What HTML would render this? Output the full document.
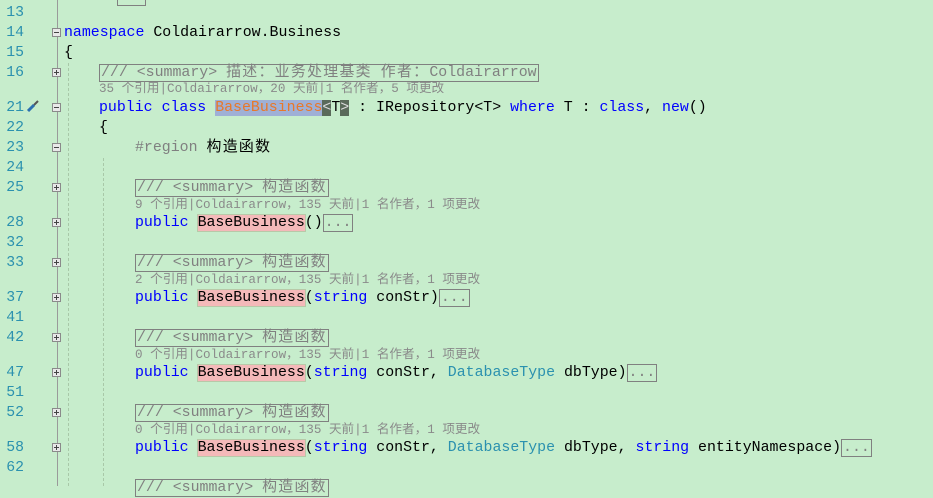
<!DOCTYPE html>
<html><head><meta charset="utf-8"><style>
html,body{margin:0;padding:0;}
body{width:933px;height:486px;background:#c7edcc;position:relative;overflow:hidden;font-family:"Liberation Mono","Noto Sans CJK SC",monospace;}
.n{position:absolute;left:0;width:24px;text-align:right;color:#2b91af;font-size:14.8px;line-height:20px;height:20px;}
.c{position:absolute;font-size:14.9px;line-height:20px;height:20px;white-space:pre;color:#000;}
.l{position:absolute;font-size:12.6px;line-height:14px;white-space:pre;color:#8a8a8a;}
.z{letter-spacing:1.3px}
.k{color:#0000ff}.t{color:#2b91af}.g{color:#808080}
.cm{color:#808080;border:1px solid #808080;padding:0 1px;line-height:18px;}
.e{border:1px solid #808080;color:#808080;padding:0 1px;line-height:18px;}
.hl{background:#f4b9b9;outline:1px solid #b8c9a8;}
.ob{position:absolute;left:52px;width:7px;height:7px;border:1px solid #8a8a8a;background:#e8e8e8;}
.ob:before{content:"";position:absolute;left:1px;top:3px;width:5px;height:1px;background:#444;}
.ob.p:after{content:"";position:absolute;left:3px;top:1px;width:1px;height:5px;background:#444;}
</style></head><body>
<div style="position:absolute;left:57px;top:0;width:1px;height:486px;background:#9a9a9a"></div>
<div style="position:absolute;left:68px;top:63px;height:423px;border-left:1px dashed #a8c8a8"></div>
<div style="position:absolute;left:103px;top:158px;height:328px;border-left:1px dashed #a8c8a8"></div>
<div style="position:absolute;left:117px;top:-10px;width:27px;height:14px;border:1px solid #808080"></div>

<div class="n" style="top:3px">13</div>
<div class="n" style="top:23px">14</div><div class="ob" style="top:28px"></div>
<div class="c" style="left:64px;top:23px"><span class="k">namespace</span> Coldairarrow.Business</div>
<div class="n" style="top:43px">15</div>
<div class="c" style="left:64px;top:43px">{</div>
<div class="n" style="top:63px">16</div><div class="ob p" style="top:68px"></div>
<div class="c" style="left:99px;top:63px"><span class="cm">/// &lt;summary&gt; <span class="z">描述：业务处理基类</span> <span class="z">作者：</span>Coldairarrow</span></div>
<div class="l" style="left:99px;top:82px">35 个引用|Coldairarrow，20 天前|1 名作者，5 项更改</div>
<div class="n" style="top:98px">21</div><div class="ob" style="top:103px"></div>
<svg style="position:absolute;left:26px;top:99px" width="14" height="14"><path d="M2 12 L8 6" stroke="#2b6fb0" stroke-width="3"/><path d="M8 6 L12 2" stroke="#555" stroke-width="2"/></svg>
<div class="c" style="left:99px;top:98px"><span class="k">public</span> <span class="k">class</span> <span style="background:#9fb0d6;color:#e8782a">BaseBusiness</span><span style="background:#5a6a5a;color:#ddd">&lt;</span>T<span style="background:#5a6a5a;color:#ddd">&gt;</span> : IRepository&lt;T&gt; <span class="k">where</span> T : <span class="k">class</span>, <span class="k">new</span>()</div>
<div class="n" style="top:118px">22</div>
<div class="c" style="left:99px;top:118px">{</div>
<div class="n" style="top:138px">23</div><div class="ob" style="top:143px"></div>
<div class="c" style="left:135px;top:138px"><span class="g">#region</span> <span class="z">构造函数</span></div>
<div class="n" style="top:158px">24</div>

<div class="n" style="top:178px">25</div><div class="ob p" style="top:183px"></div>
<div class="c" style="left:135px;top:178px"><span class="cm">/// &lt;summary&gt; <span class="z">构造函数</span></span></div>
<div class="l" style="left:135px;top:198px">9 个引用|Coldairarrow，135 天前|1 名作者，1 项更改</div>
<div class="n" style="top:213px">28</div><div class="ob p" style="top:218px"></div>
<div class="c" style="left:135px;top:213px"><span class="k">public</span> <span class="hl">BaseBusiness</span>()<span class="e">...</span></div>
<div class="n" style="top:233px">32</div>

<div class="n" style="top:253px">33</div><div class="ob p" style="top:258px"></div>
<div class="c" style="left:135px;top:253px"><span class="cm">/// &lt;summary&gt; <span class="z">构造函数</span></span></div>
<div class="l" style="left:135px;top:273px">2 个引用|Coldairarrow，135 天前|1 名作者，1 项更改</div>
<div class="n" style="top:288px">37</div><div class="ob p" style="top:293px"></div>
<div class="c" style="left:135px;top:288px"><span class="k">public</span> <span class="hl">BaseBusiness</span>(<span class="k">string</span> conStr)<span class="e">...</span></div>
<div class="n" style="top:308px">41</div>

<div class="n" style="top:328px">42</div><div class="ob p" style="top:333px"></div>
<div class="c" style="left:135px;top:328px"><span class="cm">/// &lt;summary&gt; <span class="z">构造函数</span></span></div>
<div class="l" style="left:135px;top:348px">0 个引用|Coldairarrow，135 天前|1 名作者，1 项更改</div>
<div class="n" style="top:363px">47</div><div class="ob p" style="top:368px"></div>
<div class="c" style="left:135px;top:363px"><span class="k">public</span> <span class="hl">BaseBusiness</span>(<span class="k">string</span> conStr, <span class="t">DatabaseType</span> dbType)<span class="e">...</span></div>
<div class="n" style="top:383px">51</div>

<div class="n" style="top:403px">52</div><div class="ob p" style="top:408px"></div>
<div class="c" style="left:135px;top:403px"><span class="cm">/// &lt;summary&gt; <span class="z">构造函数</span></span></div>
<div class="l" style="left:135px;top:423px">0 个引用|Coldairarrow，135 天前|1 名作者，1 项更改</div>
<div class="n" style="top:438px">58</div><div class="ob p" style="top:443px"></div>
<div class="c" style="left:135px;top:438px"><span class="k">public</span> <span class="hl">BaseBusiness</span>(<span class="k">string</span> conStr, <span class="t">DatabaseType</span> dbType, <span class="k">string</span> entityNamespace)<span class="e">...</span></div>
<div class="n" style="top:458px">62</div>
<div class="c" style="left:135px;top:478px"><span class="cm">/// &lt;summary&gt; <span class="z">构造函数</span></span></div>
</body></html>
